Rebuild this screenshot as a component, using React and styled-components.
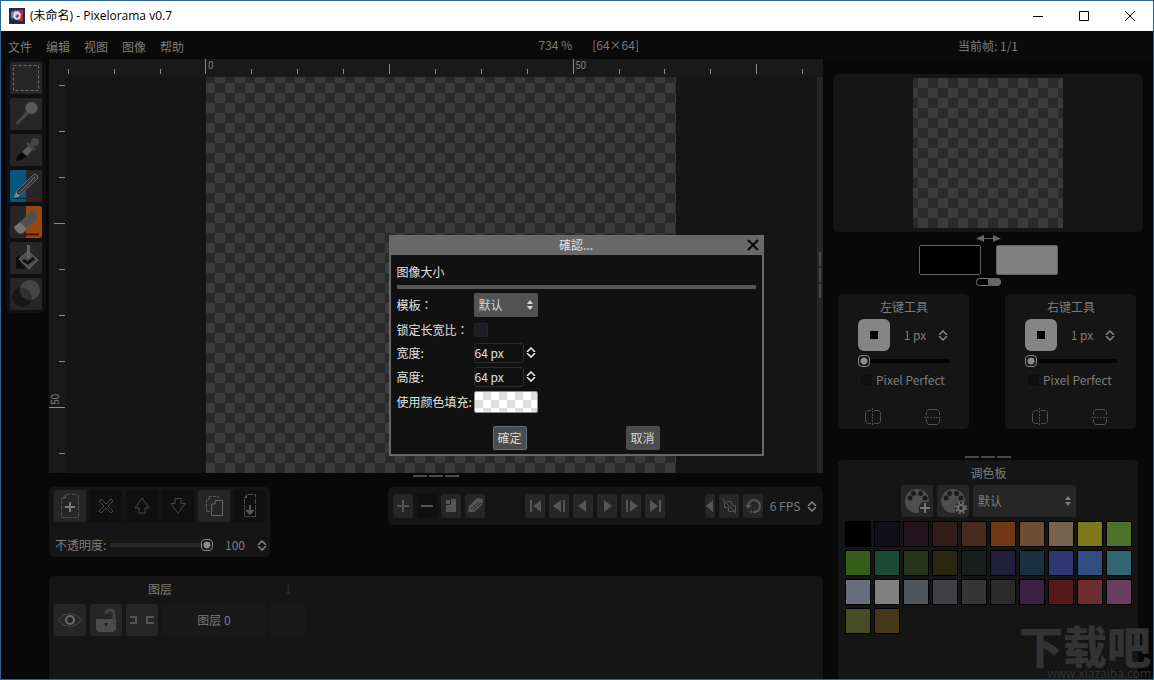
import React from "react";
import styled, { createGlobalStyle, css } from "styled-components";

const c = {
  edge: "#2a6496",
  base: "#080808",
  panel: "#151515",
  ruler: "#191919",
  button: "#262626",
  buttonOff: "#101010",
  text: "#7c7c7c",
  icon: "#555555",
  checkDark: "#2a2a2a",
  checkLight: "#3b3b3b",
};

const uiFont = '"Noto Sans CJK SC", "Noto Sans", sans-serif';

const GlobalStyle = createGlobalStyle`
  *, *::before, *::after { box-sizing: border-box; }
  body { margin: 0; background: ${c.base}; }
  button, input, select { font: inherit; color: inherit; margin: 0; padding: 0; border: 0; background: none; }
  button { display: inline-flex; align-items: center; justify-content: center; }
  svg { display: block; flex: none; }
  h1, h2, h3, p { margin: 0; font: inherit; }
`;

const Window = styled.div`
  position: relative;
  display: flex;
  flex-direction: column;
  height: 100vh;
  overflow: hidden;
  border: 1px solid ${c.edge};
  background: ${c.base};
  color: ${c.text};
  font: 12px/16px ${uiFont};
`;

/* Title bar */
const TitleBar = styled.header`
  display: flex;
  align-items: center;
  height: 30px;
  padding-left: 8px;
  background: #fff;
  color: #000;
  font-family: "Open Sans", "Noto Sans CJK SC", sans-serif;
`;
const Title = styled.h1`
  flex: 1;
  margin-left: 5px;
  white-space: nowrap;
`;
const WindowButton = styled.button`
  width: 46px;
  height: 30px;
`;

/* Menu bar */
const MenuBar = styled.div`
  display: grid;
  grid-template-columns: minmax(0, 1fr) 330px;
  align-items: center;
  height: 28px;
  padding-top: 2px;
  background: #0a0a0a;
`;
const MenuMain = styled.div`
  display: flex;
  justify-content: space-between;
  padding: 0 184px 0 7px;
`;
const Menus = styled.nav`
  display: flex;
  gap: 14px;
  padding-top: 2px;
`;
const Status = styled.div`
  display: flex;
  gap: 20px;
`;
const FrameStatus = styled.div`
  text-align: center;
`;

/* Body */
const Body = styled.main`
  display: flex;
  flex: 1;
  min-height: 0;
  padding: 0 10px 0 5px;
`;
const Toolbar = styled.aside`
  display: flex;
  flex-direction: column;
  gap: 4px;
  align-self: flex-start;
  margin-right: 3px;
  padding: 3px 4px;
  border-radius: 6px;
  background: #101010;
`;
const splitFill = {
  left: `linear-gradient(90deg, #08567f 50%, ${c.button} 50%)`,
  right: `linear-gradient(90deg, ${c.button} 50%, #98450f 50%)`,
};
const SquareButton = styled.button`
  width: 32px;
  height: 32px;
  border-radius: 2px;
  color: ${(p) => (p.disabled ? "#484848" : c.icon)};
  background: ${(p) => (p.$fill ? splitFill[p.$fill] : p.disabled ? c.buttonOff : c.button)};
`;
const Center = styled.div`
  display: flex;
  flex: 1;
  flex-direction: column;
  min-width: 0;
`;
const Side = styled.aside`
  display: flex;
  flex-direction: column;
  width: 310px;
  margin-left: 10px;
  padding-top: 15px;
`;
const Panel = styled.section`
  border-radius: 5px;
  background: ${c.panel};
`;

/* Canvas */
const checker = (light, dark, size) => css`
  background: repeating-conic-gradient(${light} 0 25%, ${dark} 0 50%) 0 0 / ${size}px ${size}px;
`;
const Viewport = styled.div`
  position: relative;
  display: grid;
  grid-template-rows: 18px minmax(0, 1fr);
  flex: 1;
  min-height: 0;
  background: ${c.ruler};
`;
const ViewRow = styled.div`
  display: grid;
  grid-template-columns: 17px minmax(0, 1fr) 6px;
  min-height: 0;
`;
const RulerSvg = styled.svg`
  width: 100%;
  height: 100%;
  overflow: hidden;
  stroke: #8c8c8c;
  text {
    font: 10px Roboto, sans-serif;
    fill: ${c.text};
    stroke: none;
  }
`;
const Stage = styled.div`
  overflow: hidden;
  padding-left: 140px;
  background: ${c.panel};
`;
const Artboard = styled.div`
  width: 470px;
  height: 100%;
  ${checker(c.checkLight, c.checkDark, 20)}
  background-position: -1px -4px;
`;
const ScrollTrack = styled.div`
  display: flex;
  justify-content: center;
  background: #262626;
`;
const Grip = styled.div`
  display: flex;
  flex-direction: ${(p) => (p.$vertical ? "column" : "row")};
  justify-content: center;
  gap: 2px;
  padding-top: ${(p) => p.$offset}px;
  height: ${(p) => (p.$height ? p.$height + "px" : "auto")};
  i {
    width: ${(p) => (p.$vertical ? 2 : 14)}px;
    height: ${(p) => (p.$vertical ? 14 : 2)}px;
    background: #4a4a4a;
  }
`;

/* Form parts */
const StepperBox = styled.span`
  display: inline-flex;
  flex-direction: column;
  gap: 1px;
  color: ${(p) => (p.$bright ? "#f0f0f0" : "#858585")};
  button { width: 10px; height: 5px; }
`;
const NumberField = styled.input`
  width: ${(p) => p.$width}px;
  height: 20px;
  padding-bottom: 2px;
  text-align: ${(p) => (p.$bright ? "left" : "center")};
  ${(p) =>
    p.$bright &&
    css`
      padding: 0;
      border: 1px solid #2c2c2c;
      border-radius: 3px;
      color: #e0e0e0;
    `}
`;
const SelectBox = styled.span`
  display: inline-grid;
  align-items: center;
  width: ${(p) => p.$width}px;
  height: ${(p) => p.$height}px;
  border-radius: 2px;
  background: ${(p) => (p.$bright ? "#525252" : c.button)};
  color: ${(p) => (p.$bright ? "#d6d6d6" : c.text)};
  select, svg { grid-area: 1 / 1; }
  select {
    appearance: none;
    width: 100%;
    height: 100%;
    padding-left: 5px;
  }
  svg {
    justify-self: end;
    margin-right: 4px;
    pointer-events: none;
  }
`;
const CheckBox = styled.input`
  appearance: none;
  width: 14px;
  height: 14px;
  border: 1px solid ${(p) => (p.$bright ? "#26262c" : "#19191b")};
  border-radius: 2px;
  background: ${(p) => (p.$bright ? "#1d1d23" : "#101012")};
`;
const Slider = styled.input`
  appearance: none;
  display: block;
  width: ${(p) => p.$width};
  height: 12px;
  &::-webkit-slider-runnable-track {
    height: 12px;
    background: linear-gradient(${(p) => p.$track}, ${(p) => p.$track}) 0 50% / 100% 4px no-repeat;
  }
  &::-webkit-slider-thumb {
    appearance: none;
    width: 12px;
    height: 12px;
    border: 1px solid #8a8a8a;
    border-radius: 4px;
    background: radial-gradient(circle, #8c8c8c 3px, #151515 4px);
  }
`;

/* Timeline */
const TimelineRow = styled.div`
  display: flex;
  align-items: flex-start;
  justify-content: space-between;
  margin-bottom: 19px;
`;
const LayerTools = styled(Panel)`
  display: flex;
  flex-direction: column;
  gap: 13px;
  width: 221px;
  height: 70px;
  padding: 3px 3px 3px 5px;
`;
const Line = styled.div`
  display: flex;
  align-items: center;
  justify-content: ${(p) => p.$justify || "flex-start"};
  gap: ${(p) => p.$gap || 4}px;
`;
const OpacityLabel = styled.label`
  width: 52px;
  padding-left: 1px;
  white-space: nowrap;
`;
const AnimationTools = styled(Panel)`
  display: flex;
  align-items: center;
  gap: 40px;
  height: 38px;
  padding: 0 6px 0 5px;
`;
const SmallButton = styled.button`
  width: ${(p) => (p.$narrow ? 10 : 20)}px;
  height: 24px;
  border-radius: 2px;
  color: ${c.icon};
  background: ${(p) => (p.disabled ? c.buttonOff : c.button)};
`;
const Layers = styled(Panel)`
  display: grid;
  grid-template-columns: 212px 36px;
  grid-template-rows: 22px 32px;
  gap: 4px;
  height: 103px;
  padding: 2px 5px;
  border-radius: 5px 5px 0 0;
`;
const LayerHead = styled.h2`
  align-self: center;
  text-align: center;
  color: ${(p) => (p.$faint ? "#303030" : c.text)};
`;
const LayerButton = styled.button`
  flex: 1;
  height: 32px;
  border-radius: 2px;
  background: #181818;
`;

/* Side column */
const Preview = styled(Panel)`
  display: flex;
  justify-content: center;
  padding: 4px;
`;
const PreviewImage = styled.div`
  width: 150px;
  height: 150px;
  ${checker(c.checkLight, c.checkDark, 20)}
  background-position: -5px 0;
`;
const SwapButton = styled.button`
  align-self: center;
  height: ${(p) => p.$height}px;
  color: #666;
`;
const ColorButton = styled.button`
  width: 62px;
  height: 30px;
  border: 1px solid #626262;
  border-radius: 2px;
  background: ${(p) => p.$color};
`;
const ToolPanels = styled.div`
  display: flex;
  gap: 36px;
  padding: 0 7px 0 5px;
`;
const ToolPanel = styled(Panel)`
  display: flex;
  flex: 1;
  flex-direction: column;
  gap: 4px;
  height: 135px;
  padding: 5px 19px 0 20px;
`;
const PanelTitle = styled.h2`
  text-align: center;
`;
const BrushButton = styled.button`
  width: 32px;
  height: 32px;
  margin-right: 2px;
  border-radius: 6px;
  background: #858585;
  color: #000;
`;
const CheckLabel = styled.label`
  display: flex;
  align-items: center;
  gap: 3px;
  padding: 1px 0 0 1px;
  white-space: nowrap;
`;
const MirrorRow = styled.div`
  display: flex;
  justify-content: space-between;
  margin-top: 15px;
  padding: 0 8px 0 6px;
  button { width: 18px; height: 20px; color: #505050; }
`;
const Palette = styled(Panel)`
  display: flex;
  flex: 1;
  flex-direction: column;
  gap: 4px;
  margin: 0 5px;
  padding: 5px 6px 0 7px;
  border-radius: 5px 5px 0 0;
`;
const Swatches = styled.div`
  display: grid;
  grid-template-columns: repeat(10, 26px);
  gap: 3px;
`;
const Swatch = styled.button`
  height: 26px;
  border: 1px solid #000;
  background: color-mix(in srgb, ${(p) => p.$color} 50%, black);
`;

/* Dialog */
const Overlay = styled.div`
  position: absolute;
  inset: 30px 2px 20px 0;
  display: flex;
  align-items: center;
  justify-content: center;
`;
const Dialog = styled.section`
  width: 375px;
  border: 2px solid #686868;
  border-top: 0;
  background: #111;
  color: #e2e2e2;
`;
const DialogBar = styled.header`
  display: grid;
  grid-template-columns: 18px 1fr 18px;
  align-items: center;
  height: 20px;
  background: #686868;
  text-align: center;
`;
const DialogBody = styled.div`
  padding: 9px 6px 4px;
`;
const DialogHeading = styled.h3`
  padding-bottom: 5px;
  border-bottom: 4px solid #565656;
`;
const DialogForm = styled.div`
  display: grid;
  grid-template-columns: 77px 1fr;
  grid-template-rows: 24px 18px 20px 20px 22px;
  gap: 4px 0;
  align-items: center;
  margin: 4px 0 13px;
  white-space: nowrap;
`;
/* The Traditional Chinese face centres the full-width colon in its cell. */
const WideColonLabel = styled.label`
  font-family: "Noto Sans CJK TC", ${uiFont};
`;
const FillButton = styled.button`
  width: 64px;
  height: 22px;
  border: 1px solid #8e8e8e;
  border-radius: 2px;
  ${checker("#dedede", "#ffffff", 16)}
`;
const DialogButton = styled.button`
  width: 34px;
  height: 24px;
  border: 1px solid ${(p) => (p.$focused ? "#5b7380" : "#4e4e4e")};
  border-radius: 2px;
  background: #4c4c4c;
  color: #d6d6d6;
`;
const Watermark = styled.div`
  position: absolute;
  right: 2px;
  bottom: 0;
  display: flex;
  flex-direction: column;
  align-items: flex-end;
  gap: 2px;
  color: #333;
  pointer-events: none;
  strong { font: 900 44px/44px ${uiFont}; }
  span { font: 12px/10px "Open Sans", sans-serif; }
`;

const Svg = ({ w = 32, h = w, children }) => (
  <svg width={w} height={h} viewBox={`0 0 ${w} ${h}`} fill="none" stroke="currentColor" aria-hidden="true">
    {children}
  </svg>
);

const tools = [
  {
    name: "Rectangular selection",
    icon: <path d="M3.5 3.5h25v25h-25z" stroke="#707070" strokeDasharray="3 2" />,
  },
  {
    name: "Magic wand",
    icon: (
      <>
        <path d="M7.500 25 19 13" strokeWidth="3" stroke="#484848" strokeLinecap="round" />
        <circle cx="21.500" cy="10" r="6" fill="#5a5a5a" stroke="#484848" />
      </>
    ),
  },
  {
    name: "Color picker",
    icon: (
      <>
        <path d="M6 27c1-5 3-7 6-9l5 4c-3 3-6 4-11 5Z" fill="#080808" stroke="none" />
        <path d="m12 18 7-7 4 4-6 7Z" fill="#5c5c5c" stroke="none" />
        <path d="m17 9 8 7" strokeWidth="3" stroke="#444" />
        <path d="m21 12 2-3" strokeWidth="4" stroke="#444" />
        <circle cx="25" cy="8" r="4" fill="#444" stroke="none" />
      </>
    ),
  },
  {
    name: "Pencil",
    fill: "left",
    icon: (
      <>
        <path d="M3 28.500h14" stroke="#0a2433" />
        <path d="M17 28.500h12" stroke="#5a1c10" />
        <path d="m5 27 2-6L24 4q4 0 4 4L10 25Z" fill="#333" stroke="#666" />
        <path d="M9 23 25 7" stroke="#777" />
        <path d="m4 28 2-6 4 4Z" fill="#888" stroke="none" />
      </>
    ),
  },
  {
    name: "Eraser",
    fill: "right",
    icon: (
      <>
        <path d="M15 28.500h14" stroke="#501000" strokeWidth="2" />
        <path d="m10 16 11-11q3-1 5 2t1 5L17 23Z" fill="#505050" stroke="none" />
        <path d="m10 16 7 7-4 4q-3 2-6-1t-3-5Z" fill="#747474" stroke="none" />
      </>
    ),
  },
  {
    name: "Bucket",
    icon: (
      <>
        <path d="M10 12 6 16v11h10l-7-9Z" fill="#0c0c0c" stroke="none" />
        <path d="M18 9 28 18 19 27 9 17Z" fill="#4e4e4e" stroke="#666" />
        <path d="m13 18 5 3 6-5" stroke="#111" strokeWidth="3" />
        <path d="M18.500 3v13" stroke="#606060" strokeWidth="3" />
      </>
    ),
  },
  {
    name: "Lighten or darken",
    icon: (
      <>
        <circle cx="12" cy="19" r="10" fill="#171717" stroke="none" />
        <circle cx="20" cy="12" r="10" fill="#464646" stroke="none" />
        <path d="M10.200 10A10 10 0 0 1 21.700 21.800 10 10 0 0 1 10.200 10Z" fill="#303030" stroke="none" />
      </>
    ),
  },
];

const layerActions = [
  {
    name: "Add layer",
    icon: (
      <>
        <path d="M12 4.500h12.500v23h-17V9" stroke="#484848" strokeDasharray="5 1" />
        <path d="M12 4v5H7Z" fill="#484848" stroke="none" />
        <path d="M16 12v10M11 17h10" stroke="#7c7c7c" strokeWidth="2" />
      </>
    ),
  },
  {
    name: "Remove layer",
    off: true,
    icon: <path d="m9 11 2-2 5 5 5-5 2 2-5 5 5 5-2 2-5-5-5 5-2-2 5-5Z" />,
  },
  { name: "Move layer up", off: true, icon: <path d="m16 8 7 10h-4v5h-6v-5H9Z" /> },
  { name: "Move layer down", off: true, icon: <path d="M13 8.500h6v5h4l-7 10-7-10h4Z" /> },
  {
    name: "Clone layer",
    icon: (
      <>
        <path d="M11 6.500h9v3M8.500 10v11.500H13" stroke="#5a5a5a" strokeDasharray="3 1" />
        <path d="M12 6v4H8Z" fill="#484848" stroke="none" />
        <path d="M17 10.500h7.500v15h-11V14H17Z" stroke="#666" />
      </>
    ),
  },
  {
    name: "Merge layer",
    off: true,
    icon: (
      <>
        <path d="M14 4.500h7.500v22M10.500 9v17.500H22" strokeDasharray="5 1" />
        <path d="m13 4-3 4h3ZM15 15h2v5h4l-5 5-5-5h4Z" fill="#5a5a5a" stroke="none" />
      </>
    ),
  },
];

const solid = (d) => <path d={d} fill="currentColor" stroke="none" />;

const frameActions = [
  { name: "Add frame", icon: <path d="M10 6v12M4 12h12" strokeWidth="2" /> },
  { name: "Remove frame", off: true, icon: <path d="M4 12h12" strokeWidth="2" /> },
  { name: "Clone frame", icon: solid("M10 5h5v13H5v-7h5Zm-5 1h4v4H5Z") },
  {
    name: "Tag frame",
    icon: (
      <>
        {solid("m3 18 1-6 8-8 6 1-1 6-8 7Z")}
        <path d="m6 15 8-7M8 16l8-7" stroke={c.button} />
      </>
    ),
  },
];

const playback = [
  { name: "First frame", icon: solid("M5 6h2v12H5ZM16 6v12l-8-6Z") },
  { name: "Previous frame", icon: solid("M12 6v12l-8-6ZM14 6h2v12h-2Z") },
  { name: "Play backwards", icon: solid("M13 6v12l-8-6Z") },
  { name: "Play", icon: solid("M7 6v12l8-6Z") },
  { name: "Next frame", icon: solid("M5 6h2v12H5ZM9 6v12l8-6Z") },
  { name: "Last frame", icon: solid("M5 6v12l8-6ZM14 6h2v12h-2Z") },
];

const palette =
  "000000 222034 45283c 663931 8f563b df7126 d9a066 eec39a fbf236 99e550 6abe30 37946e 4b692f 524b24 323c39 3f3f74 306082 5b6ee1 639bff 5fcde4 cbdbfc ffffff 9badb7 847e87 696a6a 595652 76428a ac3232 d95763 d77bba 8f974a 8a6f30"
    .split(" ")
    .map((hex) => "#" + hex);

function Stepper({ bright, label }) {
  return (
    <StepperBox $bright={bright}>
      <button aria-label={`${label} +`}>
        <Svg w={10} h={5}><path d="m1 5 4-4 4 4" strokeWidth="1.500" /></Svg>
      </button>
      <button aria-label={`${label} -`}>
        <Svg w={10} h={5}><path d="m1 0 4 4 4-4" strokeWidth="1.500" /></Svg>
      </button>
    </StepperBox>
  );
}

function Select({ label, id, bright, width, height }) {
  return (
    <SelectBox $width={width} $height={height} $bright={bright}>
      <select id={id} aria-label={label}><option>默认</option></select>
      <Svg w={8} h={12}>{solid("M1 5h6L4 1ZM1 7h6l-3 4Z")}</Svg>
    </SelectBox>
  );
}

function TopRuler() {
  const ticks = Array.from({ length: 60 }, (_, i) => i - 3);
  return (
    <RulerSvg shapeRendering="crispEdges">
      {ticks.map((n) => {
        const x = 156.500 + Math.ceil(n * 45.9);
        const top = n % 8 === 0 ? 0 : n % 4 === 0 ? 5 : 10;
        return <path key={n} d={`M${x} ${top}V15`} />;
      })}
      <text x="159" y="10">0</text>
      <text x="526" y="10">50</text>
    </RulerSvg>
  );
}

function LeftRuler() {
  const ticks = Array.from({ length: 40 }, (_, i) => i + 1);
  return (
    <RulerSvg shapeRendering="crispEdges">
      {ticks.map((n) => {
        const y = n * 46 - 37.500;
        const left = n % 8 === 0 ? 0 : n % 4 === 0 ? 5 : 10;
        return <path key={n} d={`M${left} ${y}H16`} />;
      })}
      <text transform="translate(10 328) rotate(-90)">50</text>
    </RulerSvg>
  );
}

function ToolOptions({ title, id }) {
  return (
    <ToolPanel>
      <PanelTitle>{title}</PanelTitle>
      <Line>
        <BrushButton aria-label="Brush">
          <Svg w={8}>{solid("M0 0h8v8H0Z")}</Svg>
        </BrushButton>
        <NumberField $width={38} aria-label={`${title} size`} defaultValue="1 px" />
        <Stepper label={title} />
      </Line>
      <Slider type="range" $width="100%" $track="#050505" min="1" max="50" defaultValue="1" aria-label={`${title} size`} />
      <CheckLabel htmlFor={id}>
        <CheckBox id={id} type="checkbox" />
        Pixel Perfect
      </CheckLabel>
      <MirrorRow>
        <button aria-label="Horizontal mirror">
          <Svg w={18}>
            <path d="M7 2.500H3.500L1.500 4.500v9l2 2H7M10 2.500h4.500l2 2v9l-2 2H10" />
            <path d="M8.500 0v18" strokeDasharray="2 1" />
          </Svg>
        </button>
        <button aria-label="Vertical mirror">
          <Svg w={18}>
            <path d="M2.500 7V3.500l2-2h9l2 2V7M2.500 11v3.500l2 2h9l2-2V11" />
            <path d="M0 9.500h18" strokeDasharray="2 1" />
          </Svg>
        </button>
      </MirrorRow>
    </ToolPanel>
  );
}

const PaletteGlyph = () => (
  <>
    <circle cx="16" cy="16" r="12" fill="#4e4e4e" stroke="none" />
    {[[9, 13], [12.500, 8.500], [19.500, 8.500], [24, 13]].map(([x, y]) => (
      <circle key={x} cx={x} cy={y} r="2.500" fill="#1c1c1c" stroke="none" />
    ))}
    <path d="M18 28v-7l3-4h9v12Z" fill={c.button} stroke="none" />
  </>
);

function NewImageDialog() {
  return (
    <Dialog role="dialog" aria-labelledby="dialog-title">
      <DialogBar>
        <span />
        <span id="dialog-title">確認...</span>
        <button aria-label="Close">
          <Svg w={12}><path d="m1 1 10 10M11 1 1 11" stroke="#080808" strokeWidth="2" /></Svg>
        </button>
      </DialogBar>
      <DialogBody>
        <DialogHeading>图像大小</DialogHeading>
        <DialogForm>
          <WideColonLabel htmlFor="template">模板：</WideColonLabel>
          <Select id="template" bright width={64} height={24} />
          <WideColonLabel htmlFor="lock">锁定长宽比：</WideColonLabel>
          <Line><CheckBox $bright id="lock" type="checkbox" /></Line>
          <label htmlFor="width">宽度:</label>
          <Line $gap={2}>
            <NumberField $bright $width={50} id="width" defaultValue="64 px" />
            <Stepper bright label="宽度" />
          </Line>
          <label htmlFor="height">高度:</label>
          <Line $gap={2}>
            <NumberField $bright $width={50} id="height" defaultValue="64 px" />
            <Stepper bright label="高度" />
          </Line>
          <label htmlFor="fill">使用颜色填充:</label>
          <FillButton id="fill" />
        </DialogForm>
        <Line $justify="center" $gap={99}>
          <DialogButton $focused>確定</DialogButton>
          <DialogButton>取消</DialogButton>
        </Line>
      </DialogBody>
    </Dialog>
  );
}

export default function App() {
  return (
    <>
      <GlobalStyle />
      <Window>
        <TitleBar>
          <svg width="16" height="16" viewBox="0 0 16 16" aria-hidden="true">
            <path d="M0 0h16v16H0Z" fill="#252a48" />
            <path d="M8 2h6v11H9Z" fill="#a3344c" />
            <path d="M2 4 7 2l2 4-3 5-4-1Z" fill="#5d7fc0" />
            <path d="M9 3 5 4 4 9l3 3 4-1 1-5Zm0 3 1 2-2 2-2-2Z" fill="#dcd8ea" fillRule="evenodd" />
          </svg>
          <Title>(未命名) - Pixelorama v0.7</Title>
          <WindowButton aria-label="Minimize">
            <Svg w={10}><path d="M0 5.500h10" stroke="#000" /></Svg>
          </WindowButton>
          <WindowButton aria-label="Maximize">
            <Svg w={10}><path d="M.5.5h9v9h-9z" stroke="#000" /></Svg>
          </WindowButton>
          <WindowButton aria-label="Close window">
            <Svg w={10}><path d="m0 0 10 10M10 0 0 10" stroke="#000" /></Svg>
          </WindowButton>
        </TitleBar>

        <MenuBar>
          <MenuMain>
            <Menus>
              {["文件", "编辑", "视图", "图像", "帮助"].map((m) => <button key={m}>{m}</button>)}
            </Menus>
            <Status><span>734 %</span><span>[64×64]</span></Status>
          </MenuMain>
          <FrameStatus>当前帧: 1/1</FrameStatus>
        </MenuBar>

        <Body>
          <Toolbar>
            {tools.map((t) => (
              <SquareButton key={t.name} aria-label={t.name} $fill={t.fill}><Svg>{t.icon}</Svg></SquareButton>
            ))}
          </Toolbar>

          <Center>
            <Viewport>
              <TopRuler />
              <ViewRow>
                <LeftRuler />
                <Stage><Artboard /></Stage>
                <ScrollTrack>
                  <Grip $vertical $offset={0}><i /><i /><i /></Grip>
                </ScrollTrack>
              </ViewRow>
            </Viewport>
            <Grip $offset={2} $height={14}><i /><i /><i /></Grip>
            <TimelineRow>
              <LayerTools>
                <Line>
                  {layerActions.map((a) => (
                    <SquareButton key={a.name} aria-label={a.name} disabled={a.off}><Svg>{a.icon}</Svg></SquareButton>
                  ))}
                </Line>
                <Line>
                  <OpacityLabel htmlFor="opacity">不透明度:</OpacityLabel>
                  <Slider id="opacity" type="range" $width="103px" $track="#292929" defaultValue="100" />
                  <NumberField $width={36} aria-label="Opacity value" defaultValue="100" />
                  <Stepper label="不透明度" />
                </Line>
              </LayerTools>
              <AnimationTools>
                <Line>
                  {frameActions.map((a) => (
                    <SmallButton key={a.name} aria-label={a.name} disabled={a.off}>
                      <Svg w={20} h={24}>{a.icon}</Svg>
                    </SmallButton>
                  ))}
                </Line>
                <Line>
                  {playback.map((a) => (
                    <SmallButton key={a.name} aria-label={a.name}><Svg w={20} h={24}>{a.icon}</Svg></SmallButton>
                  ))}
                </Line>
                <Line>
                  <SmallButton $narrow aria-label="Onion skinning options">
                    <Svg w={10} h={24}>{solid("M8 6v12l-7-6Z")}</Svg>
                  </SmallButton>
                  <SmallButton aria-label="Onion skinning">
                    <Svg w={20} h={24}>
                      <path d="M5.500 8.500v5h3M8 7.500h4.500v3M9.500 13v4.500h7v-6h-4" />
                      <path d="M3 4.500 17 19" />
                    </Svg>
                  </SmallButton>
                  <SmallButton aria-label="Loop">
                    <Svg w={20} h={24}>
                      <path d="M5 12a6 6 0 1 1 5 6" strokeWidth="2" />
                      <path d="M7 17.500h2" strokeWidth="2" />
                      {solid("M2 11h7l-4 4Z")}
                    </Svg>
                  </SmallButton>
                  <NumberField $width={36} aria-label="FPS" defaultValue="6 FPS" />
                  <Stepper label="FPS" />
                </Line>
              </AnimationTools>
            </TimelineRow>
            <Layers>
              <LayerHead>图层</LayerHead>
              <LayerHead $faint>1</LayerHead>
              <Line>
                <SquareButton aria-label="Visibility">
                  <Svg>
                    <path d="M4 16q12-13 24 0-12 13-24 0Z" stroke="#484848" />
                    <circle cx="16" cy="16" r="4" stroke="#6c6c6c" strokeWidth="2" />
                  </Svg>
                </SquareButton>
                <SquareButton aria-label="Lock">
                  <Svg>
                    <path d="M6 15h20v10l-3 3H9l-3-3Z" fill="#4c4c4c" stroke="none" />
                    <path d="M16 10q0-4 4-4t4 4v6" strokeWidth="3" stroke="#444" />
                    <path d="M14 19h4l-2 4Z" fill="#1c1c1c" stroke="none" />
                  </Svg>
                </SquareButton>
                <SquareButton aria-label="Link cels">
                  <Svg><path d="M4 13h6v6H4M28 13h-7v6h7" strokeWidth="2" /></Svg>
                </SquareButton>
                <LayerButton>图层 0</LayerButton>
              </Line>
              <LayerButton aria-label="Cel 1" />
            </Layers>
          </Center>

          <Side>
            <Preview><PreviewImage /></Preview>
            <SwapButton $height={13} aria-label="Swap colors">
              <Svg w={25} h={9}>
                <path d="M6 4.500h14" />
                {solid("M0 4.500 8 1v7ZM25 4.500 17 1v7Z")}
              </Svg>
            </SwapButton>
            <Line $justify="center" $gap={15}>
              <ColorButton $color="#000" aria-label="Left color" />
              <ColorButton $color="#808080" aria-label="Right color" />
            </Line>
            <SwapButton $height={19} aria-label="Default colors">
              <Svg w={25} h={18}>
                <rect x=".5" y="2.500" width="24" height="7" rx="3" fill="#000" stroke="#777" />
                {solid("M12 2h10l3 3v2l-3 3H12Z")}
              </Svg>
            </SwapButton>
            <ToolPanels>
              <ToolOptions title="左键工具" id="left-perfect" />
              <ToolOptions title="右键工具" id="right-perfect" />
            </ToolPanels>
            <Grip $offset={27} $height={31}><i /><i /><i /></Grip>
            <Palette>
              <PanelTitle>调色板</PanelTitle>
              <Line $justify="center">
                <SquareButton aria-label="Add palette">
                  <Svg>
                    <PaletteGlyph />
                    <path d="M24 18v10M19 23h10" stroke="#777" strokeWidth="2" />
                  </Svg>
                </SquareButton>
                <SquareButton aria-label="Edit palette">
                  <Svg>
                    <PaletteGlyph />
                    <circle cx="24" cy="23" r="3" stroke="#707070" strokeWidth="2" />
                    <circle cx="24" cy="23" r="5" stroke="#707070" strokeWidth="2" strokeDasharray="2 2" />
                  </Svg>
                </SquareButton>
                <Select label="调色板" width={103} height={32} />
              </Line>
              <Swatches>
                {palette.map((color) => <Swatch key={color} $color={color} aria-label={color} />)}
              </Swatches>
            </Palette>
          </Side>
        </Body>

        <Overlay><NewImageDialog /></Overlay>
        <Watermark><strong>下载吧</strong><span>www.xiazaiba.com</span></Watermark>
      </Window>
    </>
  );
}
